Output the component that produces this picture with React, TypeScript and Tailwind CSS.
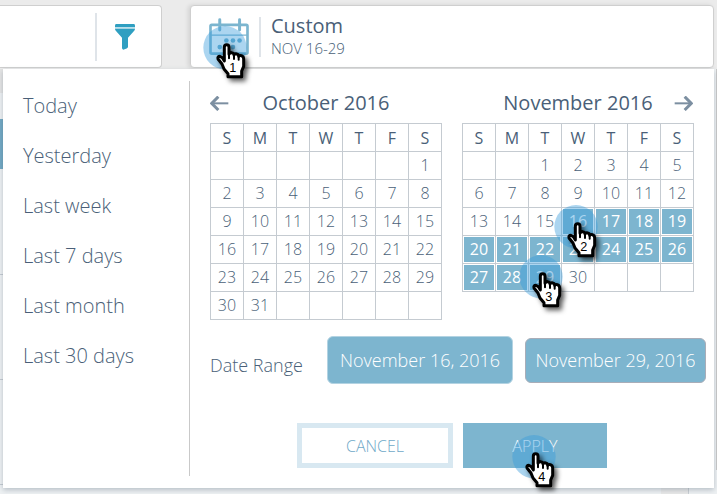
import { useState } from "react";
import clsx from "clsx";

interface Month {
  name: string;
  offset: number;
  days: number;
}

interface Step {
  step: number;
  className: string;
}

const PRESETS = [
  "Today",
  "Yesterday",
  "Last week",
  "Last 7 days",
  "Last month",
  "Last 30 days",
];

const WEEKDAYS = ["S", "M", "T", "W", "T", "F", "S"];

const OCTOBER: Month = { name: "October 2016", offset: 6, days: 31 };
const NOVEMBER: Month = { name: "November 2016", offset: 2, days: 30 };

// where the walkthrough clicks inside the calendar
const STEPS: Record<number, Step> = {
  16: { step: 2, className: "-top-2 -left-3" },
  29: { step: 3, className: "-top-3.5 -left-3.5" },
};

function toWeeks({ offset, days }: Month) {
  const count = Math.ceil((offset + days) / 7);
  return Array.from({ length: count }, (_, w) =>
    Array.from({ length: 7 }, (_, d) => {
      const day = w * 7 + d - offset + 1;
      return day >= 1 && day <= days ? day : null;
    })
  );
}

function StepPointer({ step, className }: Step) {
  return (
    <svg
      viewBox="0 0 180 210"
      className={clsx(
        "absolute z-10 h-[70px] w-[60px] pointer-events-none overflow-visible",
        className
      )}
    >
      <circle cx="78" cy="80" r="65" fill="#369bdc" fillOpacity="0.42" />
      <g className="drop-shadow-[9px_9px_8px_rgba(0,0,0,0.65)]">
        <path
          d="M76 78 Q76 71 83 71 Q90 71 90 78 V100 Q92 94 98 95 Q105 96 105 102 Q108 97 113 99 Q119 100 119 106 Q122 102 127 104 Q134 107 134 114 V136 L128 150 V167 H87 V158 L75 144 L69 129 L57 114 Q55 106 63 106 Q71 108 76 120 Z"
          fill="#fff"
          stroke="#000"
          strokeWidth="9"
          strokeLinejoin="round"
        />
        <path
          d="M90 96 V112 M105 101 V114 M119 106 V116"
          stroke="#000"
          strokeWidth="6"
          strokeLinecap="round"
        />
      </g>
      <text
        x="101"
        y="153"
        textAnchor="middle"
        fontSize="38"
        fill="#000"
        className="font-['Liberation_Sans',sans-serif]"
      >
        {step}
      </text>
    </svg>
  );
}

function CalendarIcon() {
  return (
    <svg viewBox="0 0 120 112" className="h-[37px] w-10" fill="none" stroke="#7bb5cf">
      <rect x="4" y="21" width="112" height="87" rx="4" strokeWidth="8" />
      <path d="M4 52 H116" strokeWidth="4" />
      <path d="M32 5 V36 M92 5 V36" strokeWidth="9" strokeLinecap="round" />
      <g fill="#6aaccb" stroke="none">
        <circle cx="52" cy="68" r="7" />
        <circle cx="72" cy="68" r="7" />
        <circle cx="92" cy="68" r="7" />
        <circle cx="32" cy="88" r="7" />
        <circle cx="52" cy="88" r="7" />
        <circle cx="72" cy="88" r="7" />
      </g>
    </svg>
  );
}

function FunnelIcon() {
  return (
    <svg viewBox="0 0 60 78" className="h-[26px] w-5">
      <path d="M3 0 H57 Q60 1 60 5 V10 H0 V5 Q0 1 3 0 Z" fill="#2f9fc1" />
      <path d="M0 10 H60 V14 H0 Z" fill="#b5dce8" />
      <path d="M0 14 H60 Q60 18 57 21 L39 41 V69 Q38 74 25 77 Q21 76 21 72 V41 L3 21 Q0 18 0 14 Z" fill="#2f9fc1" />
    </svg>
  );
}

function Arrow({ dir }: { dir: "left" | "right" }) {
  return (
    <svg
      viewBox="0 0 57 45"
      className={clsx("h-[15px] w-[19px]", dir === "right" && "-scale-x-100")}
      fill="none"
      stroke="#7c8fa1"
    >
      <path d="M5 22 H55" strokeWidth="6" />
      <path d="M25 2 L5 22 L25 42" strokeWidth="9" />
    </svg>
  );
}

interface MonthProps {
  month: Month;
  range?: [number, number];
  steps?: Record<number, Step>;
  arrow: "left" | "right";
}

function MonthTable({ month, range, steps = {}, arrow }: MonthProps) {
  return (
    <div className="flex-1">
      <div className="grid h-10 grid-cols-[20px_1fr_20px] items-center">
        {arrow === "left" ? (
          <button aria-label="Previous month">
            <Arrow dir="left" />
          </button>
        ) : (
          <span />
        )}
        <h2 className="text-center text-xl">{month.name}</h2>
        {arrow === "right" && (
          <button aria-label="Next month">
            <Arrow dir="right" />
          </button>
        )}
      </div>
      <table className="w-full table-fixed border-collapse text-center text-base">
        <thead>
          <tr>
            {WEEKDAYS.map((d, i) => (
              <th key={i} className="h-7 border border-[#c5cbd1] p-0 font-normal">
                {d}
              </th>
            ))}
          </tr>
        </thead>
        <tbody>
          {toWeeks(month).map((week, w) => (
            <tr key={w}>
              {week.map((day, i) => {
                const selected =
                  day !== null && !!range && day >= range[0] && day <= range[1];
                return (
                  <td key={i} className="relative h-7 border border-[#c5cbd1] p-px font-light">
                    {day !== null && (
                      <button
                        className={clsx(
                          "block h-[25px] w-full pb-0.5 leading-5",
                          selected && "bg-[#7db5cf] font-normal text-white"
                        )}
                      >
                        {day}
                      </button>
                    )}
                    {day !== null && steps[day] && <StepPointer {...steps[day]} />}
                  </td>
                );
              })}
            </tr>
          ))}
        </tbody>
      </table>
    </div>
  );
}

export default function App() {
  const [preset, setPreset] = useState<string | null>(null);

  return (
    <div className="flex min-h-screen flex-col bg-[#ebebeb] font-['Open_Sans',sans-serif] text-[#4a5f78]">
      <header className="flex h-[69px] gap-7 pt-[5px] pr-[3px]">
        <div className="flex h-[63px] w-[162px] items-center justify-end rounded-r border border-l-0 border-[#cfcfcf] bg-white pr-[26px]">
          <div className="mr-[18px] h-12 w-0.5 bg-[#dfe4e9]" />
          <button aria-label="Filter">
            <FunnelIcon />
          </button>
        </div>
        <div className="relative flex h-[63px] flex-1 items-center rounded border border-[#cfcfcf] bg-white pl-[18px] shadow-[-2px_0_4px_rgba(0,0,0,0.1)]">
          <CalendarIcon />
          <div className="mx-[10px] h-10 w-0.5 bg-[#dfe4e9]" />
          <div className="pb-0.5">
            <div className="text-xl leading-6">Custom</div>
            <div className="text-[15px] leading-5 font-light">NOV 16-29</div>
          </div>
          <StepPointer step={1} className="top-[15px] left-2" />
        </div>
      </header>

      <main className="relative flex-1 bg-[#eef1f3] px-[3px] pb-[6px]">
        {/* page content left showing around the open panel */}
        <div className="absolute inset-0 flex justify-end">
          <div className="mr-auto w-1">
            <div className="h-6 bg-[#e4e4e4]" />
            <div className="h-[26px]" />
            <div className="h-[50px] bg-[#72a9c4]" />
            <div className="h-[106px] border-b border-[#c5cbd1]" />
            <div className="h-[105px] border-b border-[#c5cbd1]" />
            <div className="h-[105px] border-b border-[#c5cbd1]" />
          </div>
          <div className="mr-6 w-7 border-r border-[#c9ced3] bg-[#e8e8e8]" />
          <div className="mb-6 w-1 border-r border-[#c9c9c9]" />
        </div>

        <div className="relative flex bg-white shadow-[0_2px_5px_rgba(60,80,100,0.3)]">
          <ul className="my-3 w-[187px] border-r border-[#c9c9c9] pl-5">
            {PRESETS.map((p) => (
              <li key={p}>
                <button
                  className="flex h-[50px] items-center text-xl font-light"
                  aria-pressed={preset === p}
                  onClick={() => setPreset(p)}
                >
                  {p}
                </button>
              </li>
            ))}
          </ul>

          <div className="flex-1 py-[14px] pr-2 pl-5">
            <div className="flex items-start gap-5 pr-3">
              <MonthTable month={OCTOBER} arrow="left" />
              <MonthTable
                month={NOVEMBER}
                arrow="right"
                range={[16, 29]}
                steps={STEPS}
              />
            </div>

            <div className="mt-4 flex items-center gap-3">
              <label htmlFor="from" className="mt-2.5 w-[105px] text-lg font-light">
                Date Range
              </label>
              <input
                id="from"
                readOnly
                value="November 16, 2016"
                className="h-12 w-0 flex-1 rounded-md border border-[#b3d3e2] bg-[#7db5cf] px-3 text-lg font-light text-white"
              />
              <input
                aria-label="End date"
                readOnly
                value="November 29, 2016"
                className="h-[45px] w-0 flex-1 rounded-md border border-[#a9adb8] bg-[#7db5cf] px-[10px] text-lg font-light text-white"
              />
            </div>

            <div className="mt-[39px] mb-[6px] flex justify-center gap-[10px] pr-3">
              <button className="h-[45px] w-[156px] border-[5px] border-[#d8e8f1] text-base font-light text-[#6fa9c8]">
                CANCEL
              </button>
              <button className="relative h-[45px] w-36 bg-[#7db5cf] text-base font-light text-white">
                APPLY
                <StepPointer step={4} className="top-[7px] left-[45px]" />
              </button>
            </div>
          </div>
        </div>
      </main>
    </div>
  );
}
